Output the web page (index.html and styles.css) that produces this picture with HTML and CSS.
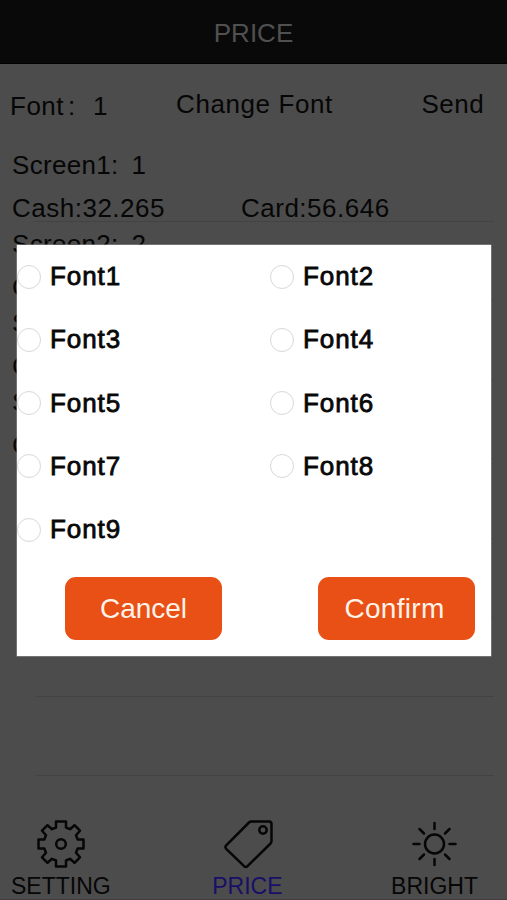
FILE: index.html
```html
<!DOCTYPE html>
<html lang="en">
<head>
<meta charset="utf-8">
<title>PRICE</title>
<link rel="stylesheet" href="styles.css">
</head>
<body>
<div class="app">
  <header class="header">PRICE</header>
  <div class="toolbar">
    <span class="current">Font<span class="colon">:</span>1</span>
    <span class="change">Change Font</span>
    <span class="send">Send</span>
  </div>
  <main class="list">
    <div class="row"><span class="name">Screen1:<b>1</b></span><span>Cash:32.265</span><span>Card:56.646</span></div>
    <div class="row"><span class="name">Screen2:<b>2</b></span><span>Cash:</span><span>Card:</span></div>
    <div class="row"><span class="name">Screen3:<b>3</b></span><span>Cash:</span><span>Card:</span></div>
    <div class="row"><span class="name">Screen4:<b>4</b></span><span>Cash:</span><span>Card:</span></div>
    <div class="row"></div>
    <div class="row"></div>
    <div class="row"></div>
    <div class="row"></div>
  </main>
  <nav class="tabs">
    <div class="tab setting">
      <svg width="50" height="50" viewBox="0 0 50 50"><path d="M20 2.500h10v6l4 1.700 4.500-4 5.500 5.500-4 4.600 1.700 4.200h5.800v9h-5.800l-1.700 4.200 4 4.600-5.500 5.500-4.500-4-4 1.700v6H20v-6l-4-1.700-4.500 4L6 38.300l4-4.600-1.700-4.200H2.500v-9h5.800l1.700-4.200-4-4.600 5.500-5.500 4.500 4 4-1.700z"/><circle cx="25" cy="25" r="4.800"/></svg>
      <span>SETTING</span>
    </div>
    <div class="tab price">
      <svg width="50" height="50" viewBox="0 0 50 50"><path d="M27.500 2.500H45q2.500 0 2.500 2.500V22q0 1.500-1 2.500L23.500 47.200q-1.700 1.600-3.400 0L2.200 29.800q-1.700-1.700 0-3.400L25 3.500q1-1 2.500-1z"/><circle cx="39" cy="11" r="3.700"/></svg>
      <span>PRICE</span>
    </div>
    <div class="tab bright">
      <svg width="50" height="50" viewBox="0 0 50 50"><circle cx="24.500" cy="25" r="9.500"/><path d="M24.500 4v6M24.500 40v6M3.500 25h6M39.500 25h6M9.500 10l4.500 4.500M35 35.500l4.500 4.500M39.500 10L35 14.500M14 35.500L9.500 40" stroke-linecap="round"/></svg>
      <span>BRIGHT</span>
    </div>
  </nav>
  <section class="dialog">
    <div class="options">
      <label><i></i>Font1</label><label><i></i>Font2</label>
      <label><i></i>Font3</label><label><i></i>Font4</label>
      <label><i></i>Font5</label><label><i></i>Font6</label>
      <label><i></i>Font7</label><label><i></i>Font8</label>
      <label><i></i>Font9</label>
    </div>
    <div class="actions"><button>Cancel</button><button class="confirm">Confirm</button></div>
  </section>
</div>
</body>
</html>
```
FILE: styles.css
```css
* { box-sizing: border-box; }
body { margin: 0; background: #4c4c4c; font-family: "Liberation Sans", Arial, sans-serif; }
.app {
  position: relative;
  width: 507px;
  height: 900px;
  display: flex;
  flex-direction: column;
  overflow: hidden;
  background: #4c4c4c;
  border-bottom: 1px solid #443c40;
  color: #060606;
  font-size: 26px;
  letter-spacing: 0.5px;
  white-space: nowrap;
}
.header {
  height: 64px;
  flex: none;
  background: #090909;
  border-bottom: 1px solid #020202;
  color: #505050;
  text-align: center;
  line-height: 66px;
  letter-spacing: 0;
}
.toolbar {
  flex: none;
  height: 79px;
  display: grid;
  grid-template-columns: 166px 245px 1fr;
  padding-left: 10px;
  line-height: 81px;
}
.current { padding-top: 2px; }
.colon { display: inline-block; width: 29px; padding-left: 4px; }
.change { letter-spacing: 0.6px; }
.send { letter-spacing: 0.5px; padding-left: 0.5px; }
.list { flex: none; }
.row {
  height: 79.15px;
  display: grid;
  grid-template-columns: 229px 1fr;
  grid-template-rows: 51px 27px;
  margin-right: 13px;
  padding: 0 0 0 12px;
  line-height: 28px;
  background: linear-gradient(#434343, #434343) 35px 78px / 460px 1px no-repeat;
}
.name { grid-column: 1 / 3; line-height: 45px; letter-spacing: 0.3px; }
.name b { font-weight: 400; margin-left: 13px; }
.tabs {
  flex: none;
  display: flex;
  justify-content: space-between;
  padding: 0 29px 0 11px;
  margin-top: 43px;
  font-size: 23px;
  letter-spacing: 0;
}
.tab { display: flex; flex-direction: column; align-items: center; line-height: 35px; }
.tab svg { fill: none; stroke: #060606; stroke-width: 2.5; stroke-linejoin: round; }
.price { margin-left: -4px; }
.price span { color: #181068; margin-right: 3px; }
.dialog {
  position: absolute;
  left: 17px;
  top: 245px;
  width: 474px;
  height: 411px;
  background: #fff;
  box-shadow: 0 0 0 0.5px #999;
  color: #080808;
}
.options {
  display: grid;
  grid-template-columns: 253px 1fr;
  grid-auto-rows: 63.3px;
}
.options label {
  display: flex;
  align-items: center;
  height: 63px;
  gap: 9px;
  font-size: 26px;
  letter-spacing: 0.9px;
  -webkit-text-stroke: 0.8px #080808;
}
.options i { width: 24px; height: 24px; border: 1.500px solid #d8d8d8; border-radius: 50%; }
.actions { display: flex; gap: 96px; padding: 16px 0 0 48px; }
button {
  width: 157px;
  height: 63px;
  padding: 0;
  border: 0;
  border-radius: 11px;
  background: #e85016;
  color: #fff3e8;
  font: 28px "Liberation Sans", Arial, sans-serif;
  letter-spacing: 0;
}
.confirm { padding-right: 4px; letter-spacing: 0.3px; }
```
